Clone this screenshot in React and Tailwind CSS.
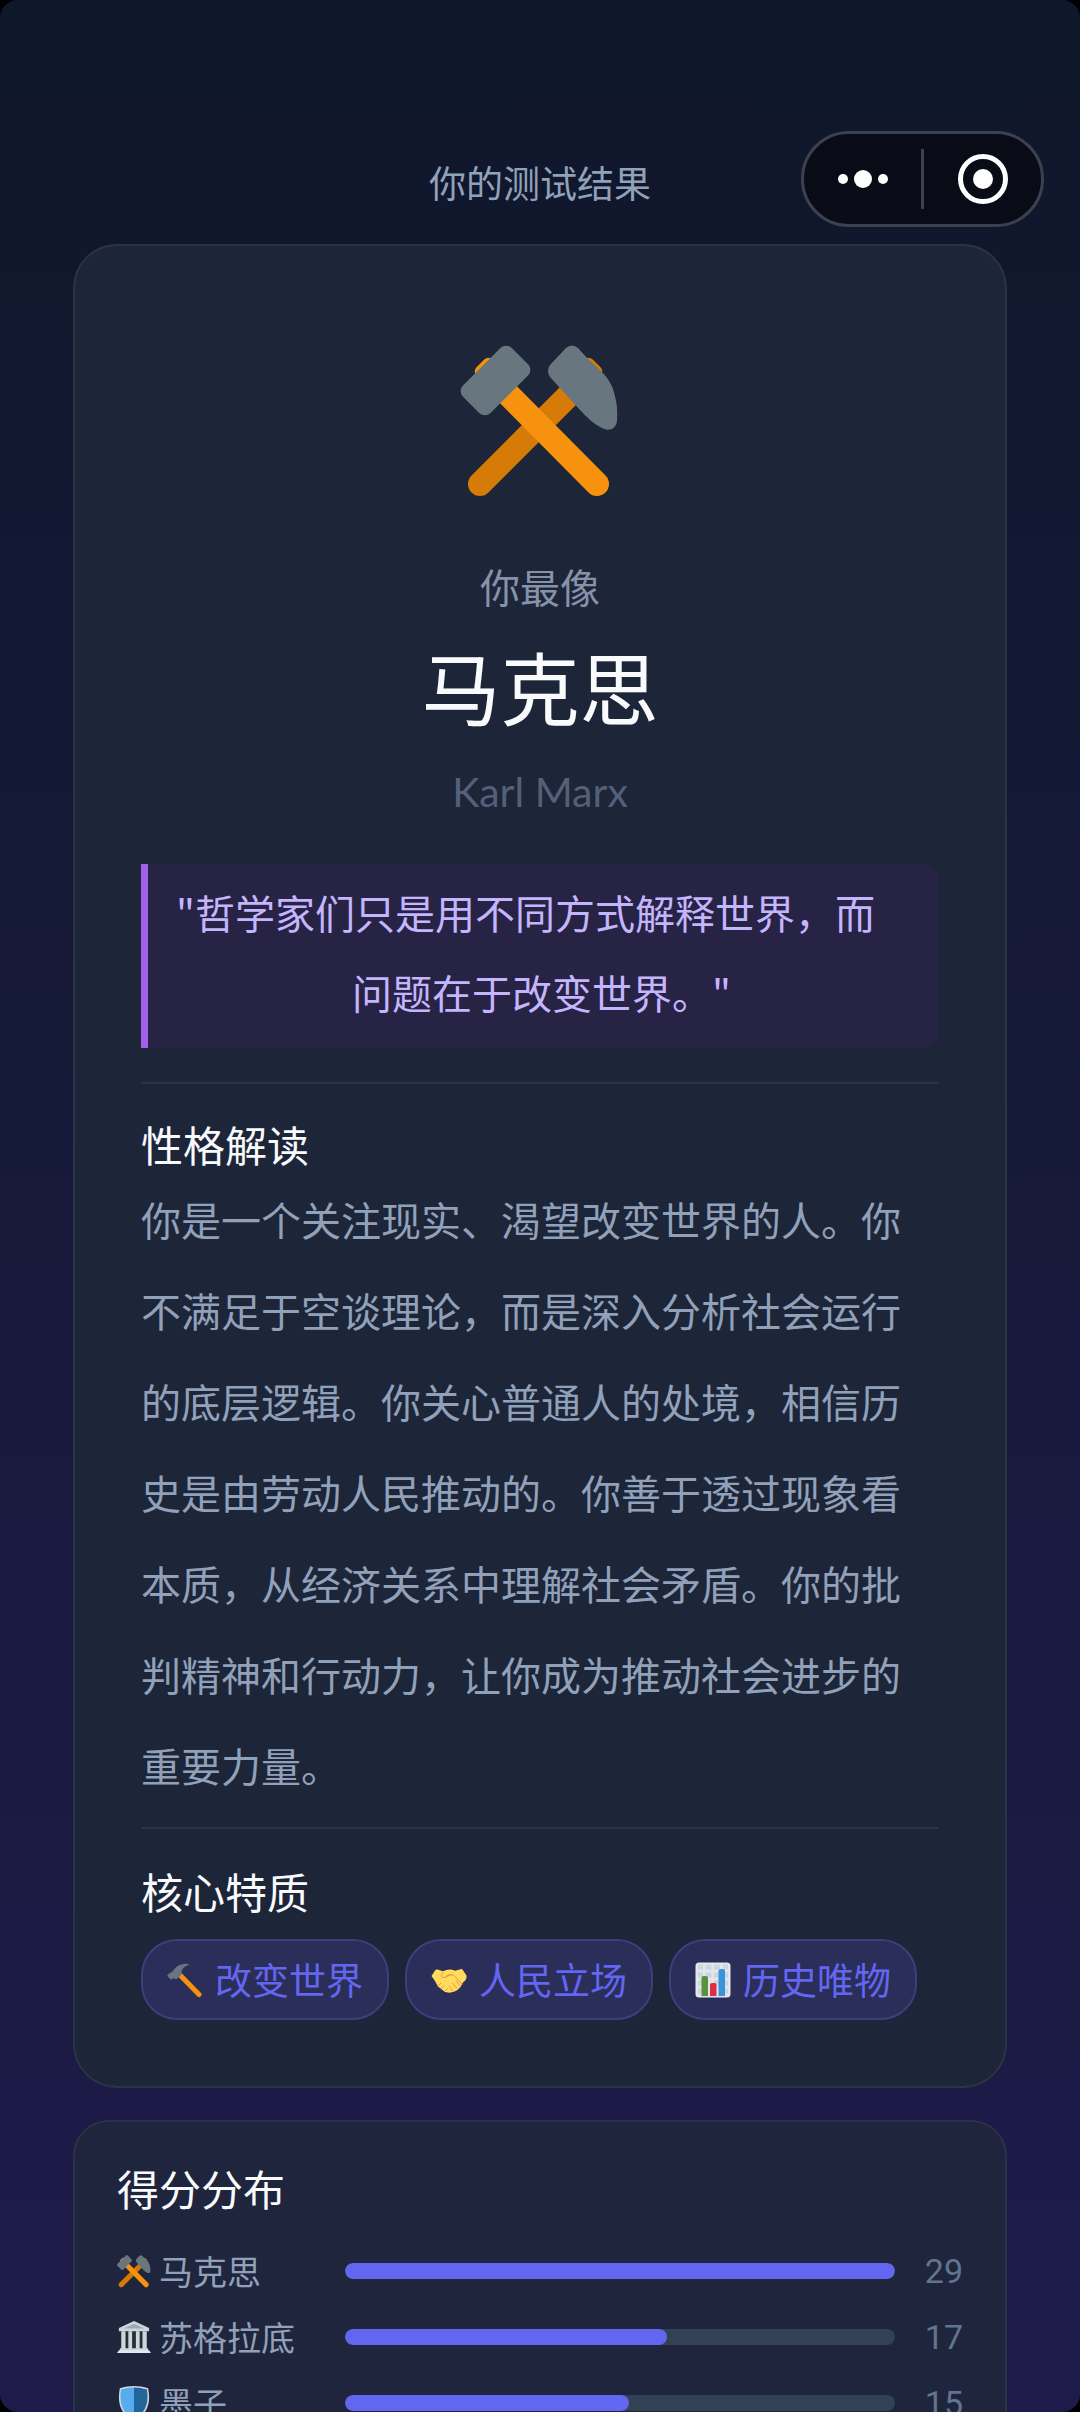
import { useState } from "react";

const traits = [
  { icon: HammerIcon, label: "改变世界" },
  { icon: HandshakeIcon, label: "人民立场" },
  { icon: ChartIcon, label: "历史唯物" },
];

const scores = [
  { icon: HammerPickIcon, name: "马克思", score: 29 },
  { icon: TempleIcon, name: "苏格拉底", score: 17 },
  { icon: ShieldIcon, name: "墨子", score: 15 },
];

const maxScore = Math.max(...scores.map((item) => item.score));

function HammerPickIcon({ className }) {
  return (
    <svg viewBox="0 0 160 160" className={className} aria-hidden="true">
      <path d="M129 35 20 144" stroke="#d67a08" strokeWidth="24" strokeLinecap="round" />
      <rect x="117" y="20" width="23" height="23" rx="6" fill="#d67a08" transform="rotate(45 128.5 31.5)" />
      <path d="M29 35 137 144" stroke="#f7920e" strokeWidth="24" strokeLinecap="round" />
      <rect x="17" y="20" width="23" height="23" rx="6" fill="#f7920e" transform="rotate(-45 28.5 31.5)" />
      <rect x="1" y="21" width="69" height="39" rx="8" fill="#687680" transform="rotate(-45 35.5 40.5)" />
      <path
        d="M106 8q6-5 12 0l10 11c11 10 21 18 25 30 3 10 5 18 4 32-1 8-8 11-15 7-10-5-16-12-22-18L90 37q-4-6 0-12z"
        fill="#687680"
      />
    </svg>
  );
}

function HammerIcon({ className }) {
  return (
    <svg viewBox="0 0 36 36" className={className} aria-hidden="true">
      <path d="m13 13 19 19.500" stroke="#f7920e" strokeWidth="5" strokeLinecap="round" />
      <path
        d="M1 12.500c-.8.800-.8 1.300 0 2.200l2.300 2.200c.8.800 1.500.700 2.200 0l.8-.9 2.900 1.600 5.800-5.700-.6-3c1.500-2.900 4-4.700 7-5.900.6-.3.400-.9-.2-1-6-.8-11 1.300-14.800 6.200-1.500 1.900-1.600 2.300-2.900 2.300z"
        fill="#66757f"
      />
    </svg>
  );
}

function HandshakeIcon({ className }) {
  return (
    <svg viewBox="0 0 36 36" className={className} aria-hidden="true">
      <path
        d="M.5 14 4 8.500q1-1.500 2.500-1l5.500 1.800Q18 6 24 8.700l5.500-1.500q1.500-.4 2.500 1l3.500 5.300c.5 3-1 5-3.500 7L29.500 25l-3 3-3.500 1.700-4.500 1-4.500-.7-7-5.500-3-5.500z"
        fill="#ffdc5d"
      />
      <path
        d="M14 15.500c3-3.500 5.500-3.500 9-2l8 8.500M25 18.500l4 5M21.500 21l4.500 5.500M18 24l4 5M7 24l3-3M10 27l3-3M13.500 29.500l3-3M12 10c-2 3-2.500 5 0 5.500 3 .5 5-2.500 8-2.500"
        fill="none"
        stroke="#ef9645"
        strokeWidth="1"
        strokeLinecap="round"
      />
    </svg>
  );
}

function ChartIcon({ className }) {
  return (
    <svg viewBox="0 0 36 36" className={className} aria-hidden="true">
      <rect x="0.500" y="0.500" width="35" height="35" rx="3.500" fill="#e1e8ed" />
      <path
        d="M3 2.500h5v5H3zM10.500 2.500h6v5h-6zM19 2.500h6v5h-6zM28 2.500h5v5h-5zM3 10.500h5v5H3zM10.500 10.500h6v5h-6zM19 10.500h6v5h-6zM28 10.500h5v5h-5zM3 18.500h5v5H3zM19 18.500h6v5h-6zM28 18.500h5v5h-5zM3 26.500h5v5H3zM28 26.500h5v5h-5z"
        fill="#ccd6dd"
      />
      <path d="M6.500 34V16q0-2 2-2h2.500q2 0 2 2v18z" fill="#5c913b" />
      <path d="M15 34V23q0-2 2-2h2.500q2 0 2 2v11z" fill="#dd2e44" />
      <path d="M23.500 34V9q0-2 2-2H28q2 0 2 2v25z" fill="#3b94d9" />
    </svg>
  );
}

function TempleIcon({ className }) {
  return (
    <svg viewBox="0 0 36 36" className={className} aria-hidden="true">
      <path d="M5 12h26v19H5z" fill="#292f33" />
      <path d="M4.500 12h4.500v19H4.500zM12 12h4v19h-4zM20 12h4v19h-4zM27 12h4.500v19H27z" fill="#ccd6dd" />
      <path d="M18 1 2 8.500V12h32V8.500z" fill="#ccd6dd" />
      <path d="M18 4 7 9h22z" fill="#9aaab4" />
      <path d="M3 30h30v3H3z" fill="#ccd6dd" />
      <path d="M2 32h32l2 3H0z" fill="#e1e8ed" />
    </svg>
  );
}

function ShieldIcon({ className }) {
  return (
    <svg viewBox="0 0 36 36" className={className} aria-hidden="true">
      <path d="M18 0c5 0 10 .8 15 2.500 1.500 8 1.500 15-1.500 21.500S24 34 18 36C12 34 7.500 30.500 4.500 24S1.500 10.500 3 2.500C8 .8 13 0 18 0z" fill="#ccd6dd" />
      <path d="M18 1.500v32.800c-5.500-2-9.300-5.300-12-11.300-2.600-6-2.800-12-1.600-19.300C9 2.200 13.500 1.500 18 1.500z" fill="#55acee" />
      <path d="M18 1.500v32.800c5.500-2 9.300-5.300 12-11.300 2.600-6 2.800-12 1.600-19.300C27 2.200 22.500 1.500 18 1.500z" fill="#226699" />
    </svg>
  );
}

function Capsule({ onMenu }) {
  return (
    <div className="absolute right-9 top-[131px] flex h-24 w-[243px] items-center rounded-full border-[3px] border-[#3d404e] bg-[#090c17]">
      <button type="button" aria-label="更多" onClick={onMenu} className="flex h-full flex-1 items-center justify-center gap-[6px]">
        <span className="size-[10px] rounded-full bg-white" />
        <span className="size-[18px] rounded-full bg-white" />
        <span className="size-[10px] rounded-full bg-white" />
      </button>
      <span className="h-[60px] w-[3px] bg-[#3d404e]" />
      <button type="button" aria-label="关闭" className="flex h-full flex-1 items-center justify-center">
        <span className="flex size-[50px] items-center justify-center rounded-full border-[5px] border-white">
          <span className="size-5 rounded-full bg-white" />
        </span>
      </button>
    </div>
  );
}

export default function App() {
  const [, setMenuOpen] = useState(false);

  return (
    <div className="h-screen bg-black font-['Noto_Sans_CJK_SC',sans-serif]">
      <div className="relative h-full overflow-y-auto rounded-[18px] bg-linear-to-b from-[#0f172a] to-[#1e1b4b] [scrollbar-width:none]">
        <Capsule onMenu={() => setMenuOpen((prev) => !prev)} />

        <header className="pt-[156px] pb-9 text-center">
          <h1 className="text-[37px] leading-[52px] text-slate-400">你的测试结果</h1>
        </header>

        <main className="mx-[73px] space-y-8 pb-8">
          <section className="rounded-[44px] border-2 border-[#2b3346] bg-[#1d2539] px-[66px] pt-[94px] pb-[66px] text-center">
            <HammerPickIcon className="mx-auto size-40" />
            <p className="mt-[58px] text-[40px] leading-14 text-[#8592a8]">你最像</p>
            <h2 className="mt-6 text-[79px] leading-24 text-slate-50">马克思</h2>
            <p className="mt-[30px] font-['Lato','Noto_Sans_CJK_SC',sans-serif] text-[41px] leading-14 text-[#536078]">Karl Marx</p>

            <blockquote className="mt-11 rounded-r-2xl border-l-[7px] border-[#a35eea] bg-[#272345] pt-2 pr-8 pb-4 pl-7 text-left text-[40px] leading-20 text-[#c4b5fd] [text-align-last:center]">
              "哲学家们只是用不同方式解释世界，而问题在于改变世界。"
            </blockquote>

            <hr className="mt-[34px] border-t-2 border-[#2b3348]" />

            <h3 className="mt-[30px] text-left text-[42px] leading-15 text-slate-50">性格解读</h3>
            <p className="text-left text-[40px] leading-[91px] text-slate-400">
              你是一个关注现实、渴望改变世界的人。你不满足于空谈理论，而是深入分析社会运行的底层逻辑。你关心普通人的处境，相信历史是由劳动人民推动的。你善于透过现象看本质，从经济关系中理解社会矛盾。你的批判精神和行动力，让你成为推动社会进步的重要力量。
            </p>

            <hr className="mt-4 border-t-2 border-[#2b3348]" />

            <h3 className="mt-8 text-left text-[42px] leading-15 text-slate-50">核心特质</h3>
            <ul className="mt-[18px] flex flex-wrap gap-4">
              {traits.map(({ icon: Icon, label }) => (
                <li
                  key={label}
                  className="flex items-center gap-3 rounded-[36px] border-2 border-[#3c3f7c] bg-[#2a2e59] px-6 py-3 text-[37px] leading-[53px] text-[#6366f1]"
                >
                  <Icon className="size-9" />
                  {label}
                </li>
              ))}
            </ul>
          </section>

          <section className="rounded-[36px] border-2 border-[#2b3148] bg-[#1e253c] px-[42px] pt-9 pb-10">
            <h3 className="text-[42px] leading-15 text-slate-50">得分分布</h3>
            <ul className="mt-[30px] space-y-5">
              {scores.map(({ icon: Icon, name, score }) => (
                <li key={name} className="flex items-center text-[34px] leading-[46px]">
                  <span className="flex w-[228px] items-center gap-2 text-slate-400">
                    <Icon className="size-[34px]" />
                    {name}
                  </span>
                  <span className="h-4 flex-1 overflow-hidden rounded-full bg-[#334155]">
                    <span className="block h-full rounded-full bg-[#6366f1]" style={{ width: `${(score / maxScore) * 100}%` }} />
                  </span>
                  <span className="w-[68px] text-right font-['Roboto',sans-serif] text-slate-500">{score}</span>
                </li>
              ))}
            </ul>
          </section>
        </main>
      </div>
    </div>
  );
}
